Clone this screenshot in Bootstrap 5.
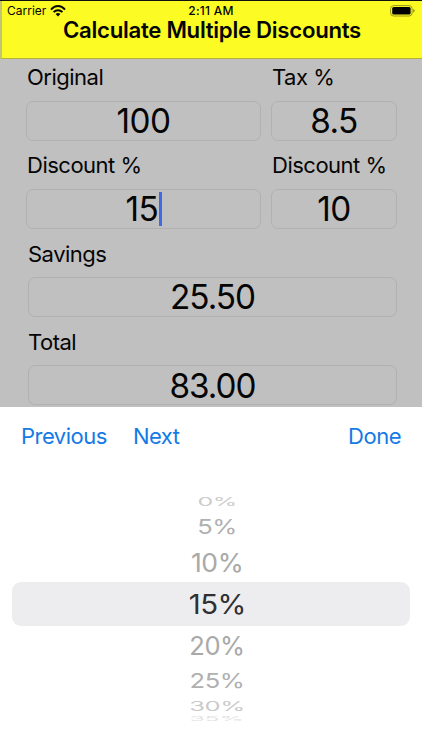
<!DOCTYPE html>
<html lang="en">
<head>
<meta charset="utf-8">
<meta name="viewport" content="width=device-width, initial-scale=1">
<title>Calculate Multiple Discounts</title>
<link href="https://cdn.jsdelivr.net/npm/bootstrap@5.3.0/dist/css/bootstrap.min.css" rel="stylesheet">
<style>
html,body{height:750px;overflow:hidden}
body{font-family:Inter,"Liberation Sans",sans-serif;color:#050505;background:#c0c0c0;line-height:1}
.screen{width:422px;height:750px;border-top:1px solid #111;border-bottom:1px solid #111}
.top-area{height:58px;background:#fcfb23;border-bottom:1px solid #b4b33c;border-left:2px solid #c5c473;flex:none}
.status-line{height:18px;padding:2px 7px 0 5px;font-size:12px}
.status-side{width:80px}
.clock{font-weight:500;font-size:12px;letter-spacing:.25px}
.title-text{font-size:22.2px;font-weight:600;line-height:22px;letter-spacing:-.28px;white-space:nowrap}
.fields{height:348px;padding:4px 25px 0 26px;flex:none;overflow:hidden}
.entry-row{height:88.3px;display:grid;grid-template-columns:235px 126px;column-gap:10px}
.entry-row.wide{grid-template-columns:369px;padding-left:2px}
.caption-text{font-size:22px;line-height:28px;margin-bottom:9.5px;padding-left:1px;white-space:nowrap;letter-spacing:-.5px}
.wide .caption-text{padding-left:0}
.value-box{height:40px;border:1px solid #b1b1b1;border-radius:7px;font-size:33.3px;letter-spacing:-.6px;padding-top:2px}
.wide .value-box{letter-spacing:-1px}
.caret{width:2.5px;height:34px;background:#4169e1;margin:-2px 0 0 1px}
.sheet{background:#fff;flex:1}
.tools{height:58px;padding:0 21px;font-size:22px;letter-spacing:-.5px}
.tools a{color:#147ae6;text-decoration:none}
.tools .next-link{margin-left:26px}
.wheel{height:262px;margin-top:25px;color:#a9a9a9;font-size:25.5px}
.wheel>div{display:flex;align-items:center;justify-content:center;width:422px;padding-left:12px;overflow:hidden}
.wheel span{display:block;line-height:30px;letter-spacing:-.4px}
.r0{height:20px;color:#cdcdcd}.r0 span{transform:translateY(2px) scale(.98,.47)}
.r5{height:31px;color:#b0b0b0}.r5 span{transform:translateY(1px) scale(1,.78)}
.r10{height:41px}.r10 span{transform:translateY(1px) scale(1.04,1)}
.wheel .r15{height:44px;width:398px;margin:0 12px;padding-left:12px;border-radius:9px;background:#ededef;color:#303032;font-size:27px}
.r15 span{transform:translateY(1px) scale(1.09,1)}
.r20{height:39px}
.r25{height:32px;color:#b0b0b0}.r25 span{transform:scale(1,.8)}
.r30{height:19px;color:#cacaca}.r30 span{transform:translateY(-1px) scale(1,.5)}
.wheel .r35{height:5px;color:#e2e2e2;align-items:flex-start}.r35 span{transform:scale(.98,.25);transform-origin:50% 0;margin-top:-1px}
</style>
</head>
<body>
<main class="screen d-flex flex-column">
  <header class="top-area">
    <div class="status-line d-flex align-items-center justify-content-between">
      <div class="status-side d-flex align-items-center gap-1"><span>Carrier</span>
        <svg width="16" height="12" viewBox="0 0 16 12" fill="none" stroke="#080800" stroke-width="2"><path d="M1 4.6C5-.1 11-.1 15 4.6M3.6 7.2C6 4.5 10 4.5 12.4 7.2"/><path d="M8 11.4 5.6 8.9Q8 7.1 10.4 8.9Z" fill="#080800" stroke="none"/></svg>
      </div>
      <span class="clock">2:11 AM</span>
      <div class="status-side d-flex justify-content-end">
        <svg width="25" height="12" viewBox="0 0 25 12"><rect x=".6" y=".6" width="21.5" height="10.4" rx="3" fill="none" stroke="#99981a"/><rect x="2.2" y="2.1" width="18.4" height="7.4" rx="1.5" fill="#000"/><path d="M23.3 4v3.7Q24.6 7 24.6 5.8T23.3 4" fill="#77761a"/></svg>
      </div>
    </div>
    <h1 class="title-text text-center mb-0">Calculate Multiple Discounts</h1>
  </header>
  <section class="fields">
    <div class="entry-row">
      <div><div class="caption-text">Original</div><div class="value-box d-flex align-items-center justify-content-center">100</div></div>
      <div><div class="caption-text">Tax %</div><div class="value-box d-flex align-items-center justify-content-center">8.5</div></div>
    </div>
    <div class="entry-row">
      <div><div class="caption-text">Discount %</div><div class="value-box d-flex align-items-center justify-content-center">15<span class="caret"></span></div></div>
      <div><div class="caption-text">Discount %</div><div class="value-box d-flex align-items-center justify-content-center">10</div></div>
    </div>
    <div class="entry-row wide"><div><div class="caption-text">Savings</div><div class="value-box d-flex align-items-center justify-content-center">25.50</div></div></div>
    <div class="entry-row wide"><div><div class="caption-text">Total</div><div class="value-box d-flex align-items-center justify-content-center">83.00</div></div></div>
  </section>
  <section class="sheet">
    <nav class="tools d-flex align-items-center"><a href="#">Previous</a><a href="#" class="next-link">Next</a><a href="#" class="ms-auto">Done</a></nav>
    <div class="wheel">
      <div class="r0"><span>0%</span></div>
      <div class="r5"><span>5%</span></div>
      <div class="r10"><span>10%</span></div>
      <div class="r15"><span>15%</span></div>
      <div class="r20"><span>20%</span></div>
      <div class="r25"><span>25%</span></div>
      <div class="r30"><span>30%</span></div>
      <div class="r35"><span>35%</span></div>
    </div>
  </section>
</main>
<script src="https://cdn.jsdelivr.net/npm/bootstrap@5.3.0/dist/js/bootstrap.bundle.min.js"></script>
</body>
</html>
